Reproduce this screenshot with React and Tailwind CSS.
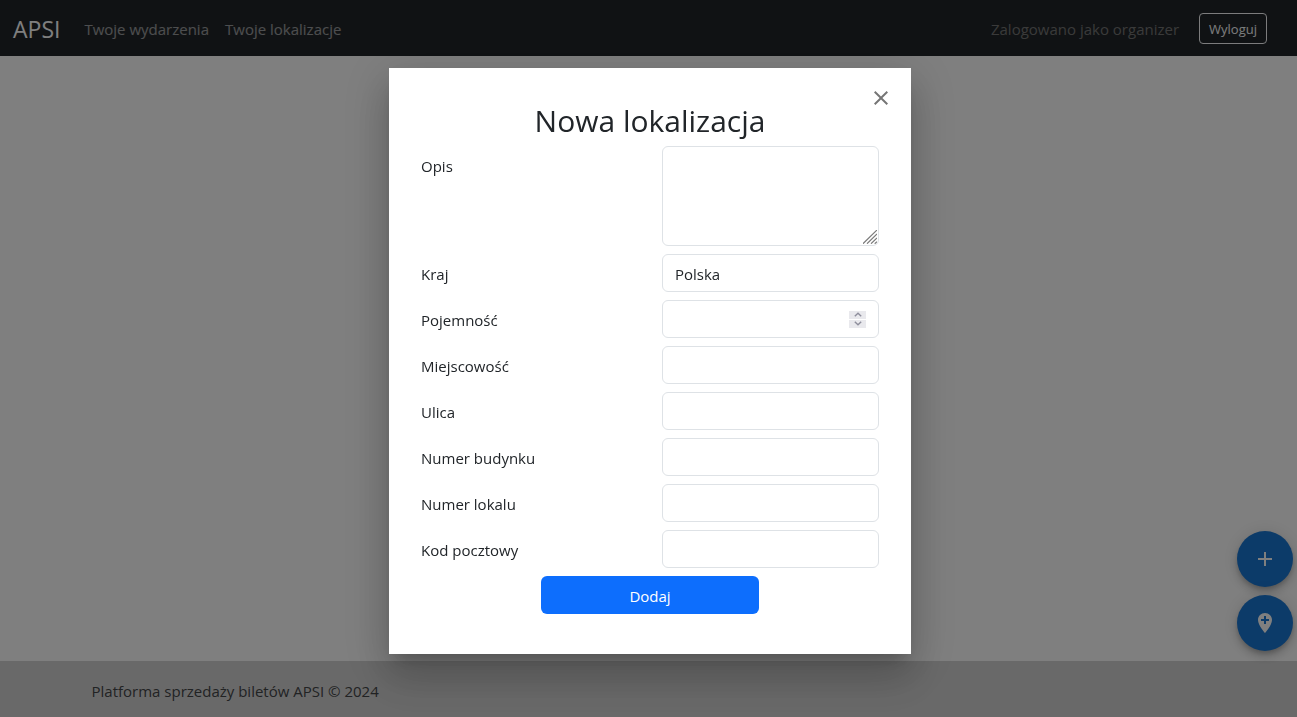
import React from "react";

const fields = [
  { id: "opis", label: "Opis", kind: "textarea" },
  { id: "kraj", label: "Kraj", kind: "text", value: "Polska" },
  { id: "pojemnosc", label: "Pojemność", kind: "number" },
  { id: "miejscowosc", label: "Miejscowość", kind: "text" },
  { id: "ulica", label: "Ulica", kind: "text" },
  { id: "numer-budynku", label: "Numer budynku", kind: "text" },
  { id: "numer-lokalu", label: "Numer lokalu", kind: "text" },
  { id: "kod-pocztowy", label: "Kod pocztowy", kind: "text" },
];

const control =
  "block w-full rounded-md border border-[#dee2e6] bg-white px-3 text-[#212529] outline-none focus:border-[#86b7fe]";

function TextareaField({ id }) {
  return (
    <div className="relative">
      <textarea id={id} className={control + " h-[100px] resize-none py-1.5"} />
      <svg
        className="pointer-events-none absolute right-0.5 bottom-0.5 h-[14px] w-[14px]"
        viewBox="0 0 14 14"
        fill="none"
        stroke="#7a7a7a"
        strokeWidth="1.2"
        aria-hidden="true"
      >
        <path d="M0 13.7L14 0M4 13.7L14 4M8 13.7L14 8M11.7 13.7L14 11.7" />
      </svg>
    </div>
  );
}

function NumberField({ id }) {
  const ref = React.useRef(null);
  return (
    <div className="relative">
      <input
        id={id}
        ref={ref}
        type="number"
        className={control + " h-[38px] [appearance:textfield]"}
      />
      <div className="absolute inset-y-0 right-[13px] flex flex-col justify-center gap-px">
        <button
          type="button"
          aria-label="Zwiększ"
          onClick={() => ref.current.stepUp()}
          className="flex h-2 w-[17px] items-center justify-center bg-[#e9e9ed]"
        >
          <svg className="h-[5px] w-2" viewBox="0 0 8 5" fill="none" stroke="#8f8f9d" strokeWidth="1.4" aria-hidden="true">
            <path d="M0.8 4.2L4 1.2L7.2 4.2" />
          </svg>
        </button>
        <button
          type="button"
          aria-label="Zmniejsz"
          onClick={() => ref.current.stepDown()}
          className="flex h-2 w-[17px] items-start justify-center bg-[#e9e9ed] pt-px"
        >
          <svg className="h-[5px] w-2" viewBox="0 0 8 5" fill="none" stroke="#8f8f9d" strokeWidth="1.4" aria-hidden="true">
            <path d="M0.8 0.8L4 3.8L7.2 0.8" />
          </svg>
        </button>
      </div>
    </div>
  );
}

function Field({ field }) {
  return (
    <div className="grid grid-cols-2 gap-x-6">
      <label htmlFor={field.id} className="pt-2 leading-6">
        {field.label}
      </label>
      {field.kind === "textarea" && <TextareaField id={field.id} />}
      {field.kind === "number" && <NumberField id={field.id} />}
      {field.kind === "text" && (
        <input id={field.id} type="text" defaultValue={field.value} className={control + " h-[38px] pt-0.5"} />
      )}
    </div>
  );
}

function Fab({ label, path }) {
  return (
    <button
      type="button"
      aria-label={label}
      className="flex size-14 items-center justify-center rounded-full bg-[#1976d2] text-white shadow-[0px_3px_5px_-1px_rgba(0,0,0,0.2),0px_6px_10px_0px_rgba(0,0,0,0.14),0px_1px_18px_0px_rgba(0,0,0,0.12)]"
    >
      <svg className="size-6" viewBox="0 0 24 24" fill="currentColor" aria-hidden="true">
        <path d={path} />
      </svg>
    </button>
  );
}

export default function App() {
  return (
    <div className="flex min-h-screen flex-col bg-white font-['Open_Sans','Noto_Sans',sans-serif] text-[15px] leading-6 text-[#212529]">
      <header className="flex h-14 items-center bg-[#212529] pr-[30px] pl-[13px]">
        <a href="#" className="mr-6 pt-0.5 text-[23px] leading-9 text-white">
          APSI
        </a>
        <nav className="flex gap-4 pt-0.5 text-white/55">
          <a href="#wydarzenia">Twoje wydarzenia</a>
          <a href="#lokalizacje">Twoje lokalizacje</a>
        </nav>
        <span className="mr-5 ml-auto pt-0.5 text-[#757575]">Zalogowano jako organizer</span>
        <button
          type="button"
          className="h-[31px] rounded-sm border border-[#f8f9fa] px-[9px] pt-0.5 text-[13px] text-[#f8f9fa]"
        >
          Wyloguj
        </button>
      </header>

      <main className="flex-1" />

      <footer className="bg-[#d3d3d3] pt-[18px] pb-[14px]">
        <div className="mx-auto max-w-[1140px] px-[13px] text-[#444648]">Platforma sprzedaży biletów APSI © 2024</div>
      </footer>

      <div className="fixed right-1 bottom-[66px] flex flex-col gap-2">
        <Fab label="Dodaj wydarzenie" path="M19 13h-6v6h-2v-6H5v-2h6V5h2v6h6v2z" />
        <Fab
          label="Dodaj lokalizację"
          path="M12 2C8.14 2 5 5.14 5 9c0 5.25 7 13 7 13s7-7.75 7-13c0-3.86-3.14-7-7-7zm4 8h-3v3h-2v-3H8V8h3V5h2v3h3v2z"
        />
      </div>

      <div className="fixed inset-0 flex items-center justify-center bg-black/50 pt-[5px] pl-[3px]">
        <section
          role="dialog"
          aria-modal="true"
          aria-labelledby="dialog-title"
          className="relative w-full max-w-[522px] bg-white px-8 pt-[34px] pb-10 shadow-[0px_11px_15px_-7px_rgba(0,0,0,0.2),0px_24px_38px_3px_rgba(0,0,0,0.14),0px_9px_46px_8px_rgba(0,0,0,0.12)]"
        >
          <button
            type="button"
            aria-label="Zamknij"
            className="absolute top-[10px] right-[10px] flex size-10 items-center justify-center text-black/54"
          >
            <svg className="size-6" viewBox="0 0 24 24" fill="currentColor" aria-hidden="true">
              <path d="M19 6.41L17.59 5 12 10.59 6.41 5 5 6.41 10.59 12 5 17.59 6.41 19 12 13.41 17.59 19 19 17.59 13.41 12z" />
            </svg>
          </button>
          <h2 id="dialog-title" className="mb-1.5 text-center text-[30px] leading-[38px]">
            Nowa lokalizacja
          </h2>
          <form className="flex flex-col gap-2" onSubmit={(e) => e.preventDefault()}>
            {fields.map((field) => (
              <Field key={field.id} field={field} />
            ))}
            <button type="submit" className="h-[38px] w-[218px] self-center rounded-md bg-[#0d6efd] pt-0.5 text-white">
              Dodaj
            </button>
          </form>
        </section>
      </div>
    </div>
  );
}
